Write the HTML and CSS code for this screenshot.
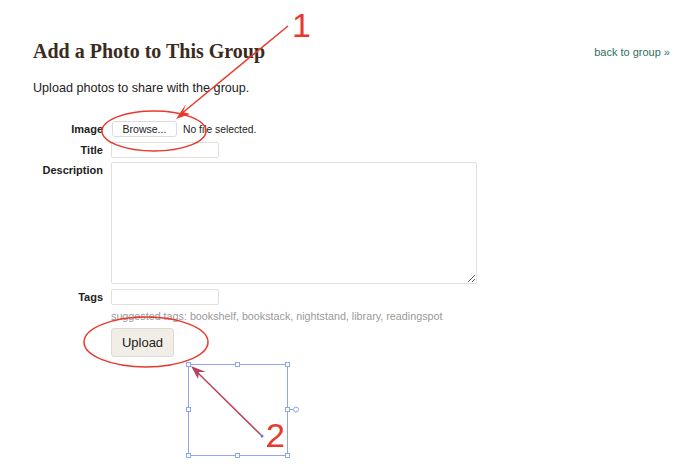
FILE: index.html
```html
<!DOCTYPE html>
<html lang="en">
<head>
    <meta charset="UTF-8">
    <title>Add a Photo to This Group</title>
    <link rel="stylesheet" href="styles.css">
</head>
<body>
    <div class="page">
        <div class="top">
            <h1>Add a Photo to This Group</h1>
            <a class="back" href="#">back to group &raquo;</a>
        </div>
        <p class="intro">Upload photos to share with the group.</p>

        <form class="upload-form">
            <label class="lbl lbl-image">Image</label>
            <div class="file-field">
                <span class="browse">Browse...</span>
                <span class="nofile">No file selected.</span>
            </div>

            <label class="lbl">Title</label>
            <div><input class="text-in" type="text"></div>

            <label class="lbl lbl-top">Description</label>
            <div><textarea class="desc"></textarea></div>

            <label class="lbl">Tags</label>
            <div><input class="text-in" type="text"></div>

            <span></span>
            <div class="suggested">suggested tags: bookshelf, bookstack, nightstand, library, readingspot</div>

            <span></span>
            <div><button type="button" class="upload-btn">Upload</button></div>
        </form>
    </div>

    <!-- annotation layer drawn over the page -->
    <svg class="notes" width="700" height="475" viewBox="0 0 700 475">
        <g fill="none" stroke="#e8392c" stroke-width="1.5">
            <ellipse cx="154" cy="131" rx="52" ry="20"/>
            <ellipse cx="146" cy="342" rx="62" ry="25"/>
            <line x1="288" y1="26" x2="181" y2="114"/>
        </g>
        <path d="M176 119 L186 104 L183 112 L190 114 Z" fill="#e8392c"/>
        <text x="292" y="37" class="num">1</text>

        <g fill="none" stroke="#8fa5f0" stroke-width="1">
            <rect x="188.5" y="364.5" width="99" height="91"/>
            <line x1="288" y1="409.5" x2="293" y2="409.5"/>
        </g>
        <g fill="#fff" stroke="#8fa5f0" stroke-width="1">
            <rect x="186.5" y="362.5" width="4" height="4"/>
            <rect x="235.5" y="362.5" width="4" height="4"/>
            <rect x="285.5" y="362.5" width="4" height="4"/>
            <rect x="186.5" y="407.5" width="4" height="4"/>
            <rect x="285.5" y="407.5" width="4" height="4"/>
            <rect x="186.5" y="453.5" width="4" height="4"/>
            <rect x="235.5" y="453.5" width="4" height="4"/>
            <rect x="285.5" y="453.5" width="4" height="4"/>
            <circle cx="296" cy="409.5" r="2.5"/>
        </g>
        <line x1="261" y1="435" x2="196" y2="371" stroke="#b5455f" stroke-width="1.5"/>
        <path d="M191 366 L206 372 L199 372 L198 379 Z" fill="#b5455f"/>
        <circle cx="262" cy="436" r="1.5" fill="#5a6ee8"/>
        <circle cx="268" cy="446" r="1.2" fill="#5a6ee8"/>
        <text x="266" y="447" class="num">2</text>
    </svg>
</body>
</html>
```

FILE: styles.css
```css
body {
    margin: 0;
    font-family: 'Liberation Sans', Arial, sans-serif;
    background-color: #fff;
    color: #222;
}
.page {
    position: relative;
    padding: 40px 30px 0 33px;
}
.top {
    display: flex;
    justify-content: space-between;
    align-items: center;
}
h1 {
    margin: 0;
    font-family: 'Liberation Serif', 'Times New Roman', serif;
    font-size: 20px;
    font-weight: bold;
    color: #3b2b1c;
}
.back {
    color: #2f6f62;
    font-size: 11px;
    text-decoration: none;
}
.intro {
    margin: 18px 0 0;
    font-size: 12.6px;
    color: #222;
}
.upload-form {
    display: grid;
    grid-template-columns: 70px 1fr;
    column-gap: 8px;
    row-gap: 5px;
    margin-top: 26px;
    font-size: 11px;
}
.lbl {
    text-align: right;
    font-weight: bold;
    color: #222;
    align-self: center;
}
.lbl-top {
    align-self: start;
    padding-top: 1px;
}
.file-field {
    display: flex;
    align-items: center;
    gap: 6px;
}
.browse {
    display: inline-block;
    width: 63px;
    height: 14px;
    line-height: 14px;
    text-align: center;
    font-size: 10.5px;
    border: 1px solid #dcdcdc;
    border-radius: 3px;
    background: #fff;
    margin-left: 1px;
}
.nofile {
    font-size: 10.3px;
}
.text-in {
    display: block;
    box-sizing: border-box;
    width: 108px;
    height: 16px;
    margin: 0;
    border: 1px solid #e2e0da;
    border-radius: 2px;
    padding: 0 3px;
}
.desc {
    display: block;
    box-sizing: border-box;
    width: 366px;
    height: 122px;
    margin: -1px 0 0;
    border: 1px solid #e2e0da;
    border-radius: 2px;
    resize: both;
}
.suggested {
    color: #9a9a9a;
    font-size: 10.75px;
    margin-top: 0;
}
.upload-btn {
    margin: 1px 0 0;
    width: 63px;
    height: 29px;
    font-family: 'Liberation Sans', Arial, sans-serif;
    font-size: 13px;
    color: #222;
    background: #f1eee7;
    border: 1px solid #dedad0;
    border-radius: 3px;
}
.notes {
    position: absolute;
    left: 0;
    top: 0;
    pointer-events: none;
}
.notes .num {
    font-family: 'Liberation Sans', Arial, sans-serif;
    font-size: 34px;
    fill: #e8392c;
}
```
